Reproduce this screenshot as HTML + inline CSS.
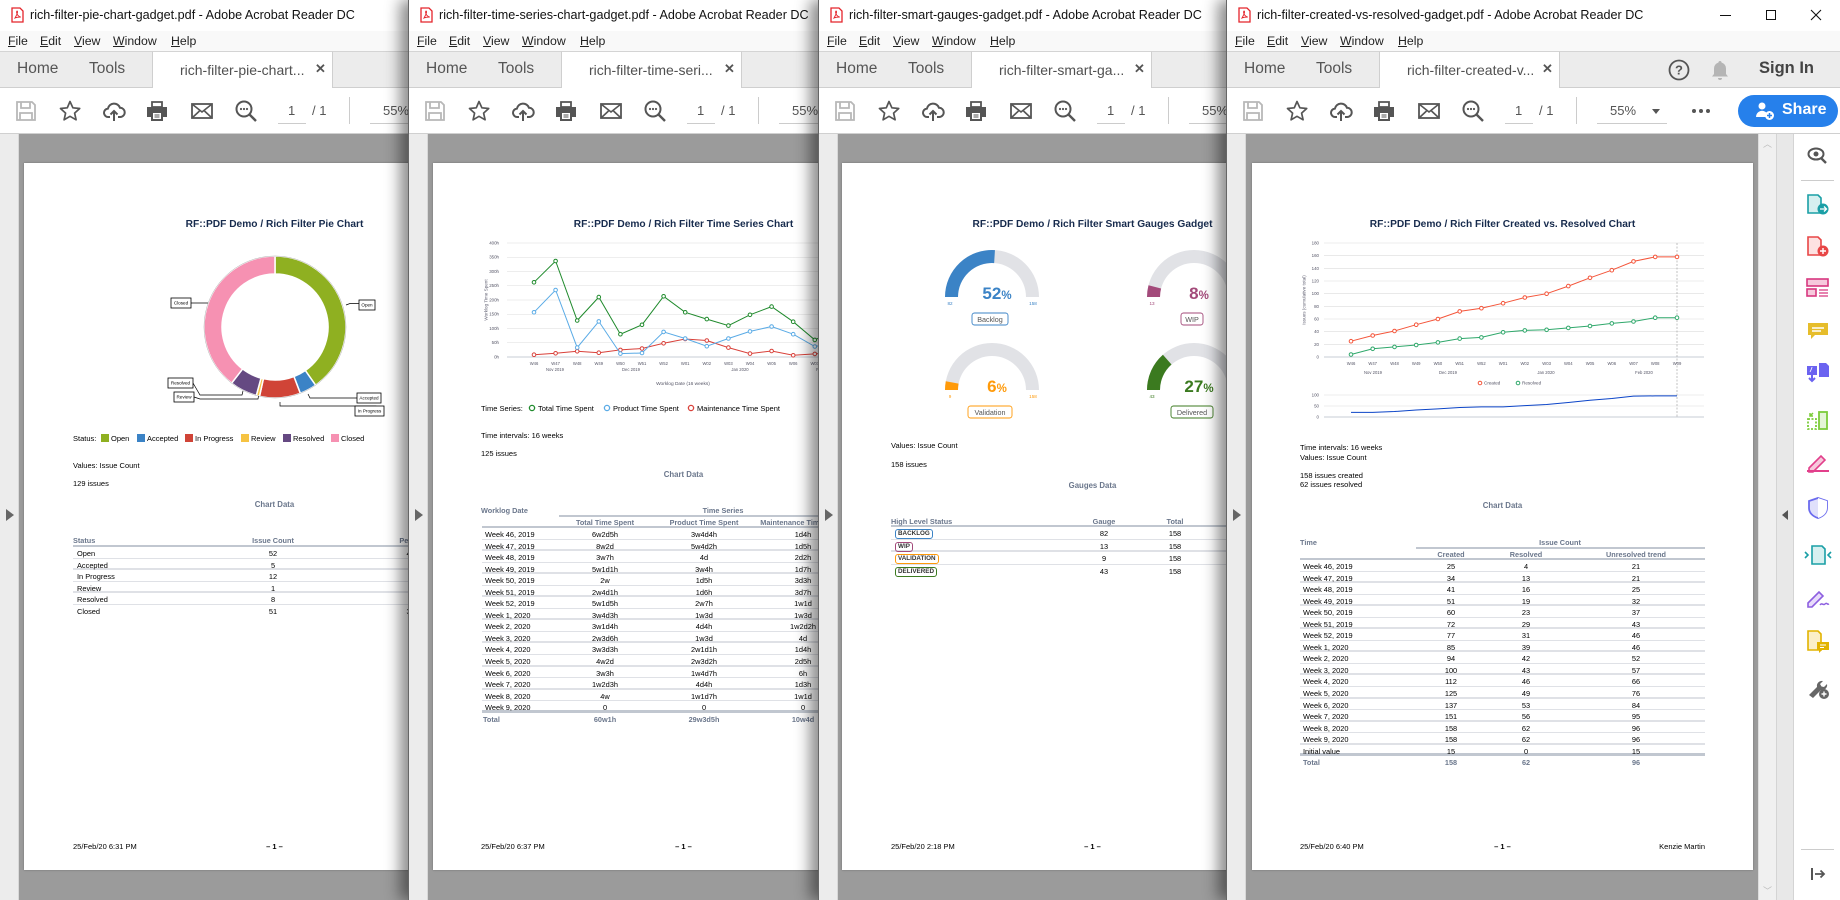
<!DOCTYPE html>
<html><head><meta charset="utf-8">
<style>
*{box-sizing:border-box}
body{margin:0;width:1840px;height:900px;overflow:hidden;background:#999;font-family:"Liberation Sans",sans-serif;position:relative}
.win{position:absolute;top:0;height:900px;background:#fff;overflow:hidden;border-left:1px solid #666}
.sh{box-shadow:-8px 0 14px rgba(0,0,0,.45)}
.a{position:absolute}
.tb{position:absolute;left:0;top:0;right:0;height:31px;background:#fff}
.tb .t{position:absolute;left:30px;top:8px;font-size:12.6px;color:#111;white-space:nowrap}
.mn{position:absolute;top:31px;height:20px;left:0;right:0;background:#f9f9f9;font-size:12.3px;color:#222}
.mn span{position:absolute;top:3px}
.mn u{text-decoration:underline}
.tabs{position:absolute;top:51px;height:37px;left:0;right:0;background:#ececec;border-top:1px solid #d4d4d4;border-bottom:1px solid #cfcfcf}
.tabs .hm{position:absolute;top:8px;font-size:15.5px;color:#555}
.tab{position:absolute;left:152px;width:181px;top:-1px;height:37px;background:#fff;border-left:1px solid #cfcfcf;border-right:1px solid #cfcfcf;border-top:1px solid #d4d4d4}
.tab span{position:absolute;left:27px;top:10px;font-size:14px;color:#505050;white-space:nowrap}
.tab b{position:absolute;left:162px;top:9px;font-size:13px;color:#555}
.tool{position:absolute;top:88px;height:46px;left:0;right:0;background:#fff;border-bottom:1px solid #d0d0d0}
.tool svg{position:absolute;top:11px;width:24px;height:24px}
.tool .n{position:absolute;top:15px;font-size:13px;color:#555}
.cont{position:absolute;top:134px;bottom:0;left:0;right:0;background:#9b9b9b}
.lp{position:absolute;left:0;top:0;bottom:0;width:19px;background:#ececec;border-right:1px solid #d8d8d8}
.lp i{position:absolute;left:6px;top:375px;width:0;height:0;border-top:6px solid transparent;border-bottom:6px solid transparent;border-left:8px solid #666}
.page{position:absolute;top:29px;width:501px;height:707px;background:#fff;overflow:hidden;box-shadow:0 0 2px rgba(0,0,0,.3)}
.p{position:absolute;font-size:7.5px;color:#000;white-space:nowrap;line-height:9px}
.ct{left:0;width:501px;text-align:center}
.ttl{font-weight:bold;font-size:10.2px;color:#172b4d;line-height:12px}
.cd{font-weight:bold;font-size:7.8px;color:#6b778c}
.tbl{position:absolute;font-size:7.4px;color:#000}
.hd{position:absolute;color:#6b778c;font-weight:bold;white-space:nowrap;font-size:7.3px}
.r{position:relative;height:11.55px;border-bottom:1px solid #dfe1e6}
.r:nth-child(odd){border-bottom:2px solid #dfe1e6}
.r span{position:absolute;top:2px;white-space:nowrap}
.r .c{transform:translateX(-50%)}
.bd{display:inline-block;border:1px solid;border-radius:3px;padding:0 2px;font-weight:bold;font-size:6.3px;line-height:8px;color:#333}
svg text{font-family:"Liberation Sans",sans-serif}
</style></head><body>

<!-- ============ WINDOW 1 ============ -->
<div class="win" style="left:0;width:410px;z-index:1;border-left:none">
 <div class="tb"><svg class="a" style="left:11px;top:7px" width="13" height="16" viewBox="0 0 13 16"><path d="M1 1h8l3 3v11H1z" fill="#fff" stroke="#e4242b" stroke-width="1.3"/><path d="M4 11c1-2 3-5 2.5-6.5S5 5 6 7s3 3 3.5 3-3.5 0-5.5 1z" fill="none" stroke="#e4242b" stroke-width=".9"/></svg><span class="t">rich-filter-pie-chart-gadget.pdf - Adobe Acrobat Reader DC</span></div>
 <div class="mn"><span style="left:8px"><u>F</u>ile</span><span style="left:40px"><u>E</u>dit</span><span style="left:74px"><u>V</u>iew</span><span style="left:113px"><u>W</u>indow</span><span style="left:171px"><u>H</u>elp</span></div>
 <div class="tabs"><span class="hm" style="left:17px">Home</span><span class="hm" style="left:89px">Tools</span><div class="tab"><span>rich-filter-pie-chart...</span><b>✕</b></div></div>
 <div class="tool">
  <svg style="left:14px" viewBox="0 0 24 24"><path d="M3 3h15l3 3v15H3z M7 3v6h9V3 M6 21v-7h12v7" fill="none" stroke="#b8b8b8" stroke-width="1.8"/></svg>
  <svg style="left:58px" viewBox="0 0 24 24"><path d="M12 2.5l2.9 6.3 6.8.7-5.1 4.6 1.5 6.7L12 17.3l-5.9 3.5 1.5-6.7L2.5 9.5l6.8-.7z" fill="none" stroke="#555" stroke-width="1.7" stroke-linejoin="round"/></svg>
  <svg style="left:102px" viewBox="0 0 24 24"><path d="M8 18H6.5a4.2 4.2 0 0 1-.6-8.4A6.3 6.3 0 0 1 18 8.8a4.6 4.6 0 0 1 .2 9.2H16 M12 22V12 M8.5 15.5 12 12l3.5 3.5" fill="none" stroke="#555" stroke-width="2"/></svg>
  <svg style="left:145px" viewBox="0 0 24 24"><path d="M7 3h10v5H7z" fill="none" stroke="#555" stroke-width="1.8"/><path d="M2 8h20v10h-4v4H6v-4H2z" fill="#555"/><rect x="8" y="14" width="8" height="6" fill="#fff"/><path d="M9.5 16h5M9.5 18h5" stroke="#555"/></svg>
  <svg style="left:190px" viewBox="0 0 24 24"><rect x="2" y="5" width="20" height="14" fill="none" stroke="#555" stroke-width="1.8"/><path d="M2 5l10 8 10-8M2 19l7.5-7M22 19l-7.5-7" fill="none" stroke="#555" stroke-width="1.6"/></svg>
  <svg style="left:234px" viewBox="0 0 24 24"><circle cx="10" cy="10" r="7.5" fill="none" stroke="#555" stroke-width="2"/><path d="M15.5 15.5 22 22" stroke="#555" stroke-width="2.4"/><circle cx="7" cy="10" r="1.1" fill="#555"/><circle cx="10" cy="10" r="1.1" fill="#555"/><circle cx="13" cy="10" r="1.1" fill="#555"/></svg>
  <span class="n" style="left:288px">1</span><div class="a" style="left:278px;top:35px;width:28px;height:1px;background:#ccc"></div>
  <span class="n" style="left:312px">/ 1</span>
  <div class="a" style="left:349px;top:9px;width:1px;height:27px;background:#ccc"></div>
  <span class="n" style="left:383px">55%</span><div class="a" style="left:370px;top:35px;width:60px;height:1px;background:#ccc"></div>
 </div>
 <div class="cont"><div class="lp"><i></i></div>
  <div class="page" style="left:24px">
   <div class="p ct ttl" style="top:56px">RF::PDF Demo / Rich Filter Pie Chart</div>
   <svg class="a" style="left:0;top:0" width="501" height="300" viewBox="0 0 501 300">
    <g stroke="#fff" stroke-width="1.5">
     <path d="M251 93A71 71 0 0 1 291.6 222.2L281.3 207.5A53 53 0 0 0 251 111Z" fill="#8fb021"/>
     <path d="M291.6 222.2A71 71 0 0 1 276.3 230.3L269.9 213.5A53 53 0 0 0 281.3 207.5Z" fill="#3b83c6"/>
     <path d="M276.3 230.3A71 71 0 0 1 235.5 233.3L239.4 215.7A53 53 0 0 0 269.9 213.5Z" fill="#d04437"/>
     <path d="M235.5 233.3A71 71 0 0 1 232.3 232.5L237 215.1A53 53 0 0 0 239.4 215.7Z" fill="#f6c342"/>
     <path d="M232.3 232.5A71 71 0 0 1 207.6 220.2L218.6 205.9A53 53 0 0 0 237 215.1Z" fill="#654982"/>
     <path d="M207.6 220.2A71 71 0 0 1 251 93L251 111A53 53 0 0 0 218.6 205.9Z" fill="#f691b2"/>
    </g>
    <circle cx="251" cy="164" r="71" fill="none" stroke="#999" stroke-width=".4"/>
    <g fill="none" stroke="#000" stroke-width=".7">
     <path d="M167 140H184"/><path d="M322 142l4-1.5H335"/>
     <path d="M169 220l7 12H218l1-4"/><path d="M170 234l6 2H234l.5-3"/>
     <path d="M357 235H286l-2-4"/><path d="M355 248l-3-5H256v-4"/>
    </g>
    <g fill="#fff" stroke="#000" stroke-width=".8">
     <rect x="147" y="135" width="20" height="10"/><rect x="335" y="137" width="16" height="10"/>
     <rect x="144" y="215" width="25" height="10"/><rect x="150" y="229" width="20" height="10"/>
     <rect x="333" y="230" width="24" height="10"/><rect x="331" y="243" width="29" height="10"/>
    </g>
    <g font-size="4.6" fill="#000" text-anchor="middle">
     <text x="157" y="141.5">Closed</text><text x="343" y="143.5">Open</text>
     <text x="156.5" y="221.5">Resolved</text><text x="160" y="235.5">Review</text>
     <text x="345" y="236.5">Accepted</text><text x="345.5" y="249.5">In Progress</text>
    </g>
   </svg>
   <div class="p" style="left:49px;top:271px">Status:</div>
   <div class="a" style="left:77px;top:271px;width:8px;height:8px;background:#8fb021"></div><div class="p" style="left:87px;top:271px">Open</div>
   <div class="a" style="left:113px;top:271px;width:8px;height:8px;background:#3b83c6"></div><div class="p" style="left:123px;top:271px">Accepted</div>
   <div class="a" style="left:161px;top:271px;width:8px;height:8px;background:#d04437"></div><div class="p" style="left:171px;top:271px">In Progress</div>
   <div class="a" style="left:217px;top:271px;width:8px;height:8px;background:#f6c342"></div><div class="p" style="left:227px;top:271px">Review</div>
   <div class="a" style="left:259px;top:271px;width:8px;height:8px;background:#654982"></div><div class="p" style="left:269px;top:271px">Resolved</div>
   <div class="a" style="left:307px;top:271px;width:8px;height:8px;background:#f691b2"></div><div class="p" style="left:317px;top:271px">Closed</div>
   <div class="p" style="left:49px;top:298px">Values: Issue Count</div>
   <div class="p" style="left:49px;top:316px">129 issues</div>
   <div class="p ct cd" style="top:337px">Chart Data</div>
   <div class="tbl" style="left:49px;top:372px;width:404px">
    <div style="position:relative;height:12px;border-bottom:2px solid #c1c7d0"><span class="hd" style="left:0;top:1px">Status</span><span class="hd" style="left:200px;top:1px;transform:translateX(-50%)">Issue Count</span><span class="hd" style="left:346px;top:1px;transform:translateX(-50%)">Percentage</span></div>
    <div class="r"><span style="left:4px">Open</span><span class="c" style="left:200px">52</span><span class="c" style="left:346px">40.31%</span></div>
    <div class="r"><span style="left:4px">Accepted</span><span class="c" style="left:200px">5</span><span class="c" style="left:346px">3.88%</span></div>
    <div class="r"><span style="left:4px">In Progress</span><span class="c" style="left:200px">12</span><span class="c" style="left:346px">9.3%</span></div>
    <div class="r"><span style="left:4px">Review</span><span class="c" style="left:200px">1</span><span class="c" style="left:346px">0.78%</span></div>
    <div class="r"><span style="left:4px">Resolved</span><span class="c" style="left:200px">8</span><span class="c" style="left:346px">6.2%</span></div>
    <div class="r" style="border-bottom:none"><span style="left:4px">Closed</span><span class="c" style="left:200px">51</span><span class="c" style="left:346px">39.53%</span></div>
   </div>
   <div class="p" style="left:49px;top:679px">25/Feb/20 6:31 PM</div>
   <div class="p ct" style="top:679px;font-weight:bold">– 1 –</div>
  </div>
 </div>
</div>

<!-- ============ WINDOW 2 ============ -->
<div class="win sh" style="left:408px;width:411px;z-index:2">
 <div class="tb"><svg class="a" style="left:11px;top:7px" width="13" height="16" viewBox="0 0 13 16"><path d="M1 1h8l3 3v11H1z" fill="#fff" stroke="#e4242b" stroke-width="1.3"/><path d="M4 11c1-2 3-5 2.5-6.5S5 5 6 7s3 3 3.5 3-3.5 0-5.5 1z" fill="none" stroke="#e4242b" stroke-width=".9"/></svg><span class="t">rich-filter-time-series-chart-gadget.pdf - Adobe Acrobat Reader DC</span></div>
 <div class="mn"><span style="left:8px"><u>F</u>ile</span><span style="left:40px"><u>E</u>dit</span><span style="left:74px"><u>V</u>iew</span><span style="left:113px"><u>W</u>indow</span><span style="left:171px"><u>H</u>elp</span></div>
 <div class="tabs"><span class="hm" style="left:17px">Home</span><span class="hm" style="left:89px">Tools</span><div class="tab"><span>rich-filter-time-seri...</span><b>✕</b></div></div>
 <div class="tool">
  <svg style="left:14px" viewBox="0 0 24 24"><path d="M3 3h15l3 3v15H3z M7 3v6h9V3 M6 21v-7h12v7" fill="none" stroke="#b8b8b8" stroke-width="1.8"/></svg>
  <svg style="left:58px" viewBox="0 0 24 24"><path d="M12 2.5l2.9 6.3 6.8.7-5.1 4.6 1.5 6.7L12 17.3l-5.9 3.5 1.5-6.7L2.5 9.5l6.8-.7z" fill="none" stroke="#555" stroke-width="1.7" stroke-linejoin="round"/></svg>
  <svg style="left:102px" viewBox="0 0 24 24"><path d="M8 18H6.5a4.2 4.2 0 0 1-.6-8.4A6.3 6.3 0 0 1 18 8.8a4.6 4.6 0 0 1 .2 9.2H16 M12 22V12 M8.5 15.5 12 12l3.5 3.5" fill="none" stroke="#555" stroke-width="2"/></svg>
  <svg style="left:145px" viewBox="0 0 24 24"><path d="M7 3h10v5H7z" fill="none" stroke="#555" stroke-width="1.8"/><path d="M2 8h20v10h-4v4H6v-4H2z" fill="#555"/><rect x="8" y="14" width="8" height="6" fill="#fff"/><path d="M9.5 16h5M9.5 18h5" stroke="#555"/></svg>
  <svg style="left:190px" viewBox="0 0 24 24"><rect x="2" y="5" width="20" height="14" fill="none" stroke="#555" stroke-width="1.8"/><path d="M2 5l10 8 10-8M2 19l7.5-7M22 19l-7.5-7" fill="none" stroke="#555" stroke-width="1.6"/></svg>
  <svg style="left:234px" viewBox="0 0 24 24"><circle cx="10" cy="10" r="7.5" fill="none" stroke="#555" stroke-width="2"/><path d="M15.5 15.5 22 22" stroke="#555" stroke-width="2.4"/><circle cx="7" cy="10" r="1.1" fill="#555"/><circle cx="10" cy="10" r="1.1" fill="#555"/><circle cx="13" cy="10" r="1.1" fill="#555"/></svg>
  <span class="n" style="left:288px">1</span><div class="a" style="left:278px;top:35px;width:28px;height:1px;background:#ccc"></div>
  <span class="n" style="left:312px">/ 1</span>
  <div class="a" style="left:349px;top:9px;width:1px;height:27px;background:#ccc"></div>
  <span class="n" style="left:383px">55%</span><div class="a" style="left:370px;top:35px;width:60px;height:1px;background:#ccc"></div>
 </div>
 <div class="cont"><div class="lp"><i></i></div>
  <div class="page" style="left:24px">
   <div class="p ct ttl" style="top:56px">RF::PDF Demo / Rich Filter Time Series Chart</div>
   <svg class="a" style="left:0;top:0" width="501" height="260" viewBox="0 0 501 260">
    <defs>
     <marker id="m1" viewBox="0 0 5 5" refX="2.5" refY="2.5" markerWidth="5" markerHeight="5" markerUnits="userSpaceOnUse"><circle cx="2.5" cy="2.5" r="1.8" fill="#fff" stroke="#1f8a2c" stroke-width="1"/></marker>
     <marker id="m2" viewBox="0 0 5 5" refX="2.5" refY="2.5" markerWidth="5" markerHeight="5" markerUnits="userSpaceOnUse"><circle cx="2.5" cy="2.5" r="1.8" fill="#fff" stroke="#5aabe6" stroke-width="1"/></marker>
     <marker id="m3" viewBox="0 0 5 5" refX="2.5" refY="2.5" markerWidth="5" markerHeight="5" markerUnits="userSpaceOnUse"><circle cx="2.5" cy="2.5" r="1.8" fill="#fff" stroke="#d9413a" stroke-width="1"/></marker>
    </defs>
    <g stroke="#dcdcdc" stroke-width=".6"><path d="M74 80H501M74 94.25H501M74 108.5H501M74 122.75H501M74 137H501M74 151.25H501M74 165.5H501M74 179.75H501"/></g>
    <path d="M74 194H501" stroke="#b5bcc8" stroke-width=".8"/>
    <g font-size="4.4" fill="#556" text-anchor="end"><text x="66" y="81.5">400h</text><text x="66" y="95.7">350h</text><text x="66" y="110">300h</text><text x="66" y="124.2">250h</text><text x="66" y="138.5">200h</text><text x="66" y="152.7">150h</text><text x="66" y="167">100h</text><text x="66" y="181.2">50h</text><text x="66" y="195.5">0h</text></g>
    <text transform="translate(54.5 137) rotate(-90)" font-size="4.6" fill="#667" text-anchor="middle">Worklog Time Spent</text>
    <g font-size="4.2" fill="#556" text-anchor="middle"><text x="101" y="202">W46</text><text x="122.6" y="202">W47</text><text x="144.2" y="202">W48</text><text x="165.8" y="202">W49</text><text x="187.4" y="202">W50</text><text x="209" y="202">W51</text><text x="230.6" y="202">W52</text><text x="252.2" y="202">W01</text><text x="273.8" y="202">W02</text><text x="295.4" y="202">W03</text><text x="317" y="202">W04</text><text x="338.6" y="202">W05</text><text x="360.2" y="202">W06</text><text x="381.8" y="202">W07</text><text x="403.4" y="202">W08</text><text x="425" y="202">W09</text>
     <text x="122" y="208">Nov 2019</text><text x="198" y="208">Dec 2019</text><text x="307" y="208">Jan 2020</text><text x="392" y="208">Feb 2020</text></g>
    <text x="250" y="222" font-size="4.8" fill="#556" text-anchor="middle">Worklog Date (16 weeks)</text>
    <polyline fill="none" stroke="#d9413a" stroke-width="1" marker-start="url(#m3)" marker-mid="url(#m3)" marker-end="url(#m3)" points="101,191.7 122.6,190.3 144.2,188.3 165.8,189.7 187.4,186.9 209,185.5 230.6,180.3 252.2,176 273.8,177.5 295.4,184.6 317,190.6 338.6,188 360.2,192.3 381.8,190.9 403.4,189.7 425,191.2"/>
    <polyline fill="none" stroke="#5aabe6" stroke-width="1" marker-start="url(#m2)" marker-mid="url(#m2)" marker-end="url(#m2)" points="101,149.3 122.6,127 144.2,184.6 165.8,158.4 187.4,190.6 209,190 230.6,168.9 252.2,175.5 273.8,183.2 295.4,175.5 317,168.4 338.6,163.5 360.2,171.2 381.8,183.5 403.4,179.8 425,182.6"/>
    <polyline fill="none" stroke="#1f8a2c" stroke-width="1" marker-start="url(#m1)" marker-mid="url(#m1)" marker-end="url(#m1)" points="101,119.3 122.6,98 144.2,157.5 165.8,134.1 187.4,171.2 209,161.8 230.6,133.3 252.2,149.3 273.8,156.1 295.4,162.6 317,151.8 338.6,143.6 360.2,158.7 381.8,176.9 403.4,167 425,174"/>
    <g fill="#fff" stroke-width="1.3"><circle cx="99" cy="245" r="2.6" stroke="#1f8a2c"/><circle cx="174" cy="245" r="2.6" stroke="#5aabe6"/><circle cx="258" cy="245" r="2.6" stroke="#d9413a"/></g>
   </svg>
   <div class="p" style="left:48px;top:241px">Time Series:</div>
   <div class="p" style="left:105px;top:241px">Total Time Spent</div>
   <div class="p" style="left:180px;top:241px">Product Time Spent</div>
   <div class="p" style="left:264px;top:241px">Maintenance Time Spent</div>
   <div class="p" style="left:48px;top:268px">Time intervals: 16 weeks</div>
   <div class="p" style="left:48px;top:286px">125 issues</div>
   <div class="p ct cd" style="top:307px">Chart Data</div>
   <div class="tbl" style="left:49px;top:341px;width:452px">
    <div style="position:relative;height:24px;border-bottom:2px solid #c1c7d0">
     <span class="hd" style="left:-1px;top:2px">Worklog Date</span>
     <span class="hd" style="left:241px;top:2px;transform:translateX(-50%)">Time Series</span>
     <div class="a" style="left:77px;top:11px;width:380px;height:2px;background:#c1c7d0"></div>
     <span class="hd" style="left:123px;top:14px;transform:translateX(-50%)">Total Time Spent</span>
     <span class="hd" style="left:222px;top:14px;transform:translateX(-50%)">Product Time Spent</span>
     <span class="hd" style="left:321px;top:14px;transform:translateX(-50%)">Maintenance Time Spent</span>
    </div>
    <div class="r"><span style="left:3px">Week 46, 2019</span><span class="c" style="left:123px">6w2d5h</span><span class="c" style="left:222px">3w4d4h</span><span class="c" style="left:321px">1d4h</span></div>
    <div class="r"><span style="left:3px">Week 47, 2019</span><span class="c" style="left:123px">8w2d</span><span class="c" style="left:222px">5w4d2h</span><span class="c" style="left:321px">1d5h</span></div>
    <div class="r"><span style="left:3px">Week 48, 2019</span><span class="c" style="left:123px">3w7h</span><span class="c" style="left:222px">4d</span><span class="c" style="left:321px">2d2h</span></div>
    <div class="r"><span style="left:3px">Week 49, 2019</span><span class="c" style="left:123px">5w1d1h</span><span class="c" style="left:222px">3w4h</span><span class="c" style="left:321px">1d7h</span></div>
    <div class="r"><span style="left:3px">Week 50, 2019</span><span class="c" style="left:123px">2w</span><span class="c" style="left:222px">1d5h</span><span class="c" style="left:321px">3d3h</span></div>
    <div class="r"><span style="left:3px">Week 51, 2019</span><span class="c" style="left:123px">2w4d1h</span><span class="c" style="left:222px">1d6h</span><span class="c" style="left:321px">3d7h</span></div>
    <div class="r"><span style="left:3px">Week 52, 2019</span><span class="c" style="left:123px">5w1d5h</span><span class="c" style="left:222px">2w7h</span><span class="c" style="left:321px">1w1d</span></div>
    <div class="r"><span style="left:3px">Week 1, 2020</span><span class="c" style="left:123px">3w4d3h</span><span class="c" style="left:222px">1w3d</span><span class="c" style="left:321px">1w3d</span></div>
    <div class="r"><span style="left:3px">Week 2, 2020</span><span class="c" style="left:123px">3w1d4h</span><span class="c" style="left:222px">4d4h</span><span class="c" style="left:321px">1w2d2h</span></div>
    <div class="r"><span style="left:3px">Week 3, 2020</span><span class="c" style="left:123px">2w3d6h</span><span class="c" style="left:222px">1w3d</span><span class="c" style="left:321px">4d</span></div>
    <div class="r"><span style="left:3px">Week 4, 2020</span><span class="c" style="left:123px">3w3d3h</span><span class="c" style="left:222px">2w1d1h</span><span class="c" style="left:321px">1d4h</span></div>
    <div class="r"><span style="left:3px">Week 5, 2020</span><span class="c" style="left:123px">4w2d</span><span class="c" style="left:222px">2w3d2h</span><span class="c" style="left:321px">2d5h</span></div>
    <div class="r"><span style="left:3px">Week 6, 2020</span><span class="c" style="left:123px">3w3h</span><span class="c" style="left:222px">1w4d7h</span><span class="c" style="left:321px">6h</span></div>
    <div class="r"><span style="left:3px">Week 7, 2020</span><span class="c" style="left:123px">1w2d3h</span><span class="c" style="left:222px">4d4h</span><span class="c" style="left:321px">1d3h</span></div>
    <div class="r"><span style="left:3px">Week 8, 2020</span><span class="c" style="left:123px">4w</span><span class="c" style="left:222px">1w1d7h</span><span class="c" style="left:321px">1w1d</span></div>
    <div class="r" style="border-bottom:3px solid #c1c7d0"><span style="left:3px">Week 9, 2020</span><span class="c" style="left:123px">0</span><span class="c" style="left:222px">0</span><span class="c" style="left:321px">0</span></div>
    <div style="position:relative;height:12px"><span class="hd" style="left:1px;top:2px">Total</span><span class="hd" style="left:123px;top:2px;transform:translateX(-50%)">60w1h</span><span class="hd" style="left:222px;top:2px;transform:translateX(-50%)">29w3d5h</span><span class="hd" style="left:321px;top:2px;transform:translateX(-50%)">10w4d</span></div>
   </div>
   <div class="p" style="left:48px;top:679px">25/Feb/20 6:37 PM</div>
   <div class="p ct" style="top:679px;font-weight:bold">– 1 –</div>
  </div>
 </div>
</div>

<!-- ============ WINDOW 3 ============ -->
<div class="win sh" style="left:818px;width:410px;z-index:3">
 <div class="tb"><svg class="a" style="left:11px;top:7px" width="13" height="16" viewBox="0 0 13 16"><path d="M1 1h8l3 3v11H1z" fill="#fff" stroke="#e4242b" stroke-width="1.3"/><path d="M4 11c1-2 3-5 2.5-6.5S5 5 6 7s3 3 3.5 3-3.5 0-5.5 1z" fill="none" stroke="#e4242b" stroke-width=".9"/></svg><span class="t">rich-filter-smart-gauges-gadget.pdf - Adobe Acrobat Reader DC</span></div>
 <div class="mn"><span style="left:8px"><u>F</u>ile</span><span style="left:40px"><u>E</u>dit</span><span style="left:74px"><u>V</u>iew</span><span style="left:113px"><u>W</u>indow</span><span style="left:171px"><u>H</u>elp</span></div>
 <div class="tabs"><span class="hm" style="left:17px">Home</span><span class="hm" style="left:89px">Tools</span><div class="tab"><span>rich-filter-smart-ga...</span><b>✕</b></div></div>
 <div class="tool">
  <svg style="left:14px" viewBox="0 0 24 24"><path d="M3 3h15l3 3v15H3z M7 3v6h9V3 M6 21v-7h12v7" fill="none" stroke="#b8b8b8" stroke-width="1.8"/></svg>
  <svg style="left:58px" viewBox="0 0 24 24"><path d="M12 2.5l2.9 6.3 6.8.7-5.1 4.6 1.5 6.7L12 17.3l-5.9 3.5 1.5-6.7L2.5 9.5l6.8-.7z" fill="none" stroke="#555" stroke-width="1.7" stroke-linejoin="round"/></svg>
  <svg style="left:102px" viewBox="0 0 24 24"><path d="M8 18H6.5a4.2 4.2 0 0 1-.6-8.4A6.3 6.3 0 0 1 18 8.8a4.6 4.6 0 0 1 .2 9.2H16 M12 22V12 M8.5 15.5 12 12l3.5 3.5" fill="none" stroke="#555" stroke-width="2"/></svg>
  <svg style="left:145px" viewBox="0 0 24 24"><path d="M7 3h10v5H7z" fill="none" stroke="#555" stroke-width="1.8"/><path d="M2 8h20v10h-4v4H6v-4H2z" fill="#555"/><rect x="8" y="14" width="8" height="6" fill="#fff"/><path d="M9.5 16h5M9.5 18h5" stroke="#555"/></svg>
  <svg style="left:190px" viewBox="0 0 24 24"><rect x="2" y="5" width="20" height="14" fill="none" stroke="#555" stroke-width="1.8"/><path d="M2 5l10 8 10-8M2 19l7.5-7M22 19l-7.5-7" fill="none" stroke="#555" stroke-width="1.6"/></svg>
  <svg style="left:234px" viewBox="0 0 24 24"><circle cx="10" cy="10" r="7.5" fill="none" stroke="#555" stroke-width="2"/><path d="M15.5 15.5 22 22" stroke="#555" stroke-width="2.4"/><circle cx="7" cy="10" r="1.1" fill="#555"/><circle cx="10" cy="10" r="1.1" fill="#555"/><circle cx="13" cy="10" r="1.1" fill="#555"/></svg>
  <span class="n" style="left:288px">1</span><div class="a" style="left:278px;top:35px;width:28px;height:1px;background:#ccc"></div>
  <span class="n" style="left:312px">/ 1</span>
  <div class="a" style="left:349px;top:9px;width:1px;height:27px;background:#ccc"></div>
  <span class="n" style="left:383px">55%</span><div class="a" style="left:370px;top:35px;width:60px;height:1px;background:#ccc"></div>
 </div>
 <div class="cont"><div class="lp"><i></i></div>
  <div class="page" style="left:23px">
   <div class="p ct ttl" style="top:56px">RF::PDF Demo / Rich Filter Smart Gauges Gadget</div>
   <svg class="a" style="left:0;top:0" width="501" height="270" viewBox="0 0 501 270">
    <g fill="#e1e2e6">
     <path d="M103 134A47 47 0 0 1 197 134L184 134A34 34 0 0 0 116 134Z"/>
     <path d="M305 134A47 47 0 0 1 399 134L386 134A34 34 0 0 0 318 134Z"/>
     <path d="M103 227A47 47 0 0 1 197 227L184 227A34 34 0 0 0 116 227Z"/>
     <path d="M305 227A47 47 0 0 1 399 227L386 227A34 34 0 0 0 318 227Z"/>
    </g>
    <path d="M103 134A47 47 0 0 1 152.95 87.1L152.14 100.07A34 34 0 0 0 116 134Z" fill="#3b83c6"/>
    <path d="M305 134A47 47 0 0 1 306.5 122.3L319.1 125.54A34 34 0 0 0 318 134Z" fill="#a34a7a"/>
    <path d="M103 227A47 47 0 0 1 103.8 218.2L116.6 220.63A34 34 0 0 0 116 227Z" fill="#ff9a0a"/>
    <path d="M305 227A47 47 0 0 1 320.9 191.7L329.5 201.5A34 34 0 0 0 318 227Z" fill="#3b7a1f"/>
    <g font-weight="bold" text-anchor="middle">
     <text x="155" y="136" fill="#3b83c6" font-size="17">52<tspan font-size="11.5">%</tspan></text>
     <text x="357" y="136" fill="#a34a7a" font-size="17">8<tspan font-size="11.5">%</tspan></text>
     <text x="155" y="229" fill="#ff9a0a" font-size="17">6<tspan font-size="11.5">%</tspan></text>
     <text x="357" y="229" fill="#3b7a1f" font-size="17">27<tspan font-size="11.5">%</tspan></text>
    </g>
    <g font-size="4.6" text-anchor="middle">
     <text x="108" y="142" fill="#3b83c6">82</text><text x="191" y="142" fill="#3b83c6">158</text>
     <text x="310" y="142" fill="#a34a7a">13</text><text x="393" y="142" fill="#a34a7a">158</text>
     <text x="108" y="235" fill="#ff9a0a">9</text><text x="191" y="235" fill="#ff9a0a">158</text>
     <text x="310" y="235" fill="#3b7a1f">43</text><text x="393" y="235" fill="#3b7a1f">158</text>
    </g>
    <g fill="#fff" stroke-width=".9">
     <rect x="130" y="150" width="36" height="12" rx="2.5" stroke="#3b83c6"/>
     <rect x="339" y="150" width="22" height="12" rx="2.5" stroke="#a34a7a"/>
     <rect x="126" y="243" width="44" height="12" rx="2.5" stroke="#ff9a0a"/>
     <rect x="329" y="243" width="42" height="12" rx="2.5" stroke="#3b7a1f"/>
    </g>
    <g font-size="7.2" text-anchor="middle" fill="#555">
     <text x="148" y="158.8">Backlog</text><text x="350" y="158.8">WIP</text>
     <text x="148" y="251.8">Validation</text><text x="350" y="251.8">Delivered</text>
    </g>
   </svg>
   <div class="p" style="left:49px;top:278px">Values: Issue Count</div>
   <div class="p" style="left:49px;top:297px">158 issues</div>
   <div class="p ct cd" style="top:318px">Gauges Data</div>
   <div class="tbl" style="left:49px;top:352px;width:452px">
    <div style="position:relative;height:12px;border-bottom:2px solid #c1c7d0"><span class="hd" style="left:0;top:2px">High Level Status</span><span class="hd" style="left:213px;top:2px;transform:translateX(-50%)">Gauge</span><span class="hd" style="left:284px;top:2px;transform:translateX(-50%)">Total</span></div>
    <div class="r" style="height:12.7px"><span style="left:4px;top:1px"><span class="bd" style="position:static;border-color:#3b83c6">BACKLOG</span></span><span class="c" style="left:213px">82</span><span class="c" style="left:284px">158</span></div>
    <div class="r" style="height:12.7px"><span style="left:4px;top:1px"><span class="bd" style="position:static;border-color:#a34a7a">WIP</span></span><span class="c" style="left:213px">13</span><span class="c" style="left:284px">158</span></div>
    <div class="r" style="height:12.7px"><span style="left:4px;top:1px"><span class="bd" style="position:static;border-color:#ff9a0a">VALIDATION</span></span><span class="c" style="left:213px">9</span><span class="c" style="left:284px">158</span></div>
    <div class="r" style="height:12.7px;border-bottom:none"><span style="left:4px;top:1px"><span class="bd" style="position:static;border-color:#3b7a1f">DELIVERED</span></span><span class="c" style="left:213px">43</span><span class="c" style="left:284px">158</span></div>
   </div>
   <div class="p" style="left:49px;top:679px">25/Feb/20 2:18 PM</div>
   <div class="p ct" style="top:679px;font-weight:bold">– 1 –</div>
  </div>
 </div>
</div>

<!-- ============ WINDOW 4 ============ -->
<div class="win sh" style="left:1226px;width:614px;z-index:4">
 <div class="tb"><svg class="a" style="left:11px;top:7px" width="13" height="16" viewBox="0 0 13 16"><path d="M1 1h8l3 3v11H1z" fill="#fff" stroke="#e4242b" stroke-width="1.3"/><path d="M4 11c1-2 3-5 2.5-6.5S5 5 6 7s3 3 3.5 3-3.5 0-5.5 1z" fill="none" stroke="#e4242b" stroke-width=".9"/></svg><span class="t">rich-filter-created-vs-resolved-gadget.pdf - Adobe Acrobat Reader DC</span>
  <div class="a" style="left:493px;top:15px;width:11px;height:1px;background:#111"></div>
  <div class="a" style="left:539px;top:10px;width:10px;height:10px;border:1px solid #111"></div>
  <svg class="a" style="left:583px;top:9px" width="12" height="12" viewBox="0 0 12 12"><path d="M1 1l10 10M11 1 1 11" stroke="#111" stroke-width="1.1"/></svg>
 </div>
 <div class="mn"><span style="left:8px"><u>F</u>ile</span><span style="left:40px"><u>E</u>dit</span><span style="left:74px"><u>V</u>iew</span><span style="left:113px"><u>W</u>indow</span><span style="left:171px"><u>H</u>elp</span></div>
 <div class="tabs"><span class="hm" style="left:17px">Home</span><span class="hm" style="left:89px">Tools</span><div class="tab"><span>rich-filter-created-v...</span><b>✕</b></div>
  <svg class="a" style="left:441px;top:7px" width="22" height="22" viewBox="0 0 22 22"><circle cx="11" cy="11" r="9.5" fill="none" stroke="#555" stroke-width="1.8"/><text x="11" y="15.5" font-size="13" font-weight="bold" fill="#555" text-anchor="middle">?</text></svg>
  <svg class="a" style="left:483px;top:7px" width="20" height="22" viewBox="0 0 20 22"><path d="M10 2a1.5 1.5 0 0 1 1.5 1.5A6 6 0 0 1 16 9.5V15l2 2.5H2L4 15V9.5a6 6 0 0 1 4.5-6A1.5 1.5 0 0 1 10 2z" fill="#b5b5b5"/><path d="M8 19h4a2 2 0 0 1-4 0z" fill="#b5b5b5"/></svg>
  <span class="a" style="left:532px;top:7px;font-size:16.5px;font-weight:bold;color:#444">Sign In</span>
 </div>
 <div class="tool">
  <svg style="left:14px" viewBox="0 0 24 24"><path d="M3 3h15l3 3v15H3z M7 3v6h9V3 M6 21v-7h12v7" fill="none" stroke="#b8b8b8" stroke-width="1.8"/></svg>
  <svg style="left:58px" viewBox="0 0 24 24"><path d="M12 2.5l2.9 6.3 6.8.7-5.1 4.6 1.5 6.7L12 17.3l-5.9 3.5 1.5-6.7L2.5 9.5l6.8-.7z" fill="none" stroke="#555" stroke-width="1.7" stroke-linejoin="round"/></svg>
  <svg style="left:102px" viewBox="0 0 24 24"><path d="M8 18H6.5a4.2 4.2 0 0 1-.6-8.4A6.3 6.3 0 0 1 18 8.8a4.6 4.6 0 0 1 .2 9.2H16 M12 22V12 M8.5 15.5 12 12l3.5 3.5" fill="none" stroke="#555" stroke-width="2"/></svg>
  <svg style="left:145px" viewBox="0 0 24 24"><path d="M7 3h10v5H7z" fill="none" stroke="#555" stroke-width="1.8"/><path d="M2 8h20v10h-4v4H6v-4H2z" fill="#555"/><rect x="8" y="14" width="8" height="6" fill="#fff"/><path d="M9.5 16h5M9.5 18h5" stroke="#555"/></svg>
  <svg style="left:190px" viewBox="0 0 24 24"><rect x="2" y="5" width="20" height="14" fill="none" stroke="#555" stroke-width="1.8"/><path d="M2 5l10 8 10-8M2 19l7.5-7M22 19l-7.5-7" fill="none" stroke="#555" stroke-width="1.6"/></svg>
  <svg style="left:234px" viewBox="0 0 24 24"><circle cx="10" cy="10" r="7.5" fill="none" stroke="#555" stroke-width="2"/><path d="M15.5 15.5 22 22" stroke="#555" stroke-width="2.4"/><circle cx="7" cy="10" r="1.1" fill="#555"/><circle cx="10" cy="10" r="1.1" fill="#555"/><circle cx="13" cy="10" r="1.1" fill="#555"/></svg>
  <span class="n" style="left:288px">1</span><div class="a" style="left:278px;top:35px;width:28px;height:1px;background:#ccc"></div>
  <span class="n" style="left:312px">/ 1</span>
  <div class="a" style="left:349px;top:9px;width:1px;height:27px;background:#ccc"></div>
  <span class="n" style="left:383px">55%</span><div class="a" style="left:370px;top:35px;width:70px;height:1px;background:#ccc"></div>
  <div class="a" style="left:425px;top:21px;width:0;height:0;border-left:4px solid transparent;border-right:4px solid transparent;border-top:5px solid #555"></div>
  <div class="a" style="left:465px;top:21px;width:4px;height:4px;border-radius:2px;background:#555;box-shadow:7px 0 0 #555,14px 0 0 #555"></div>
  <div class="a" style="left:511px;top:7px;width:100px;height:32px;border-radius:16px;background:#2680eb"></div>
  <svg class="a" style="left:528px;top:13px;width:20px;height:20px" viewBox="0 0 20 20"><circle cx="7" cy="5" r="3.5" fill="#fff"/><path d="M1 16a6 6 0 0 1 11-3.5V16z" fill="#fff"/><circle cx="14.5" cy="14.5" r="4.5" fill="#fff"/><path d="M14.5 12v5M12 14.5h5" stroke="#2680eb" stroke-width="1.5"/></svg>
  <span class="a" style="left:555px;top:13px;font-size:16px;font-weight:bold;color:#fff">Share</span>
 </div>
 <div class="cont"><div class="lp"><i></i></div>
  <div class="a" style="left:531px;top:0;bottom:0;width:18px;background:#f0f0f0;border-left:1px solid #ddd"><span class="a" style="left:4px;top:3px;font-size:9px;color:#bbb">︿</span><span class="a" style="left:4px;bottom:3px;font-size:9px;color:#bbb">﹀</span></div>
  <div class="a" style="left:549px;top:0;bottom:0;width:18px;background:#e8e8e8;border-left:1px solid #d4d4d4;border-right:1px solid #d4d4d4"><div class="a" style="left:5px;top:376px;width:0;height:0;border-top:5px solid transparent;border-bottom:5px solid transparent;border-right:6px solid #555"></div></div>
  <div class="a" style="left:567px;top:0;bottom:0;width:47px;background:#fff">
   <svg class="a" style="left:13px;top:12px" width="22" height="20" viewBox="0 0 22 20"><ellipse cx="9" cy="8" rx="7.5" ry="5.5" fill="none" stroke="#555" stroke-width="2"/><circle cx="9" cy="8" r="2.5" fill="#555"/><path d="M14 12l5 5" stroke="#555" stroke-width="2.4"/></svg>
   <div class="a" style="left:7px;top:46px;width:33px;height:1px;background:#ccc"></div>
   <svg class="a" style="left:12px;top:60px" width="24" height="22" viewBox="0 0 24 22"><path d="M2 1h10l3 3v15H2z" fill="#d6f0f0" stroke="#1a9fa6" stroke-width="1.6"/><circle cx="17" cy="15" r="5.5" fill="#1a9fa6"/><path d="M14 15h6M18 12.5l2.5 2.5-2.5 2.5" stroke="#fff" stroke-width="1.3" fill="none"/></svg>
   <svg class="a" style="left:12px;top:102px" width="24" height="22" viewBox="0 0 24 22"><path d="M2 1h10l3 3v15H2z" fill="#fde1e1" stroke="#e84646" stroke-width="1.6"/><circle cx="17" cy="15" r="5.5" fill="#e84646"/><path d="M17 12v6M14 15h6" stroke="#fff" stroke-width="1.4"/></svg>
   <svg class="a" style="left:12px;top:143px" width="24" height="22" viewBox="0 0 24 22"><rect x="1" y="2" width="21" height="7" fill="#f6c9dc" stroke="#d7377f" stroke-width="1.6"/><rect x="1" y="12" width="9" height="7" fill="#f6c9dc" stroke="#d7377f" stroke-width="1.6"/><path d="M13 13h9M13 16h9M13 19h9" stroke="#d7377f" stroke-width="1.2"/></svg>
   <svg class="a" style="left:12px;top:187px" width="24" height="22" viewBox="0 0 24 22"><path d="M2 2h20v12H9l-4 4v-4H2z" fill="#e6bd2b"/><path d="M6 7h12M6 10h9" stroke="#fff" stroke-width="1.4"/></svg>
   <svg class="a" style="left:12px;top:228px" width="24" height="22" viewBox="0 0 24 22"><path d="M1 4h10v9H1z" fill="#6b63f0"/><path d="M13 1h7l3 3v11h-10z" fill="#6b63f0"/><path d="M6 13v6M3 16l3 3 3-3" stroke="#6b63f0" stroke-width="2" fill="none"/><path d="M4 10c1-2 2-4 2-5" stroke="#fff" stroke-width=".8" fill="none"/></svg>
   <svg class="a" style="left:12px;top:276px" width="24" height="22" viewBox="0 0 24 22"><rect x="13" y="2" width="8" height="17" fill="#e4f5d6" stroke="#7ccc3a" stroke-width="1.8"/><path d="M2 9h8v10H2z" fill="none" stroke="#7ccc3a" stroke-width="1.8" stroke-dasharray="2 1.5"/><path d="M4 6l3-3M4 3v3h3" stroke="#7ccc3a" stroke-width="1.5" fill="none"/></svg>
   <svg class="a" style="left:12px;top:317px" width="24" height="22" viewBox="0 0 24 22"><path d="M3 17l12-12 4 4-12 12H3z" fill="#f6c9dc" stroke="#e23f8b" stroke-width="1.6"/><path d="M1 20h22" stroke="#e23f8b" stroke-width="2"/></svg>
   <svg class="a" style="left:12px;top:363px" width="24" height="22" viewBox="0 0 24 22"><path d="M12 1l9 3v7c0 5-4 8.5-9 10-5-1.5-9-5-9-10V4z" fill="#e0e0fb" stroke="#6b6bee" stroke-width="1.8"/><path d="M12 1v20c5-1.5 9-5 9-10V4z" fill="#fff"/></svg>
   <svg class="a" style="left:10px;top:410px" width="28" height="22" viewBox="0 0 28 22"><path d="M8 2h10l3 3v15H8z" fill="#d6f0f0" stroke="#1a9fa6" stroke-width="1.6"/><path d="M1 8l3 3-3 3M27 8l-3 3 3 3" stroke="#1a9fa6" stroke-width="1.6" fill="none"/></svg>
   <svg class="a" style="left:12px;top:452px" width="24" height="22" viewBox="0 0 24 22"><path d="M2 17l11-11 4 4-11 11H2z" fill="#e8dbfb" stroke="#8d5fe0" stroke-width="1.6"/><path d="M14 19c2-3 3 1 5-1s2 1 4 0" stroke="#8d5fe0" stroke-width="1.5" fill="none"/></svg>
   <svg class="a" style="left:12px;top:496px" width="24" height="24" viewBox="0 0 24 24"><path d="M2 1h10l3 3v16H2z" fill="#fbefc8" stroke="#e2b300" stroke-width="1.6"/><path d="M11 12h12v8h-7l-3 3v-3h-2z" fill="#e2b300"/><path d="M14 15h6M14 17.5h4" stroke="#fff" stroke-width="1"/></svg>
   <svg class="a" style="left:12px;top:542px" width="24" height="24" viewBox="0 0 24 24"><path d="M3 19l8-8a5 5 0 0 1 6-6l-3 3 1.5 2.5L18 11l3-3a5 5 0 0 1-6 6l-8 8z" fill="#666"/><circle cx="18" cy="18" r="5" fill="#666"/><path d="M18 15.5v5M15.5 18h5" stroke="#fff" stroke-width="1.4"/></svg>
   <div class="a" style="left:7px;top:715px;width:33px;height:1px;background:#ccc"></div>
   <svg class="a" style="left:16px;top:733px" width="16" height="14" viewBox="0 0 16 14"><path d="M2 1v12" stroke="#555" stroke-width="2"/><path d="M5 7h9M10.5 3.5 14 7l-3.5 3.5" stroke="#555" stroke-width="1.8" fill="none"/></svg>
  </div>
  <div class="page" style="left:25px">
   <div class="p ct ttl" style="top:56px">RF::PDF Demo / Rich Filter Created vs. Resolved Chart</div>
   <svg class="a" style="left:0;top:0" width="501" height="270" viewBox="0 0 501 270">
    <defs>
     <marker id="m4" viewBox="0 0 5 5" refX="2.5" refY="2.5" markerWidth="5" markerHeight="5" markerUnits="userSpaceOnUse"><circle cx="2.5" cy="2.5" r="1.8" fill="#fff" stroke="#f4553a" stroke-width="1"/></marker>
     <marker id="m5" viewBox="0 0 5 5" refX="2.5" refY="2.5" markerWidth="5" markerHeight="5" markerUnits="userSpaceOnUse"><circle cx="2.5" cy="2.5" r="1.8" fill="#fff" stroke="#2fa86b" stroke-width="1"/></marker>
    </defs>
    <g stroke="#dcdcdc" stroke-width=".6"><path d="M72 80H452M72 92.7H452M72 105.3H452M72 118H452M72 130.7H452M72 143.3H452M72 156H452M72 168.7H452M72 181.3H452M72 232H452M72 243H452"/></g>
    <path d="M72 194H452M72 254H452" stroke="#b5bcc8" stroke-width=".8"/>
    <path d="M425 80V254" stroke="#999" stroke-width=".6" stroke-dasharray="2 1.5"/>
    <g font-size="4.4" fill="#556" text-anchor="end"><text x="67" y="81.5">180</text><text x="67" y="94.2">160</text><text x="67" y="106.8">140</text><text x="67" y="119.5">120</text><text x="67" y="132.2">100</text><text x="67" y="144.8">80</text><text x="67" y="157.5">60</text><text x="67" y="170.2">40</text><text x="67" y="182.8">20</text><text x="67" y="195.5">0</text><text x="67" y="233.5">100</text><text x="67" y="244.5">50</text><text x="67" y="255.5">0</text></g>
    <text transform="translate(53.5 137) rotate(-90)" font-size="4.6" fill="#667" text-anchor="middle">Issues (cumulative total)</text>
    <g font-size="4.2" fill="#556" text-anchor="middle"><text x="99" y="202">W46</text><text x="120.7" y="202">W47</text><text x="142.5" y="202">W48</text><text x="164.2" y="202">W49</text><text x="185.9" y="202">W50</text><text x="207.7" y="202">W51</text><text x="229.4" y="202">W52</text><text x="251.1" y="202">W01</text><text x="272.8" y="202">W02</text><text x="294.6" y="202">W03</text><text x="316.3" y="202">W04</text><text x="338" y="202">W05</text><text x="359.8" y="202">W06</text><text x="381.5" y="202">W07</text><text x="403.2" y="202">W08</text><text x="425" y="202">W09</text>
     <text x="121" y="211">Nov 2019</text><text x="196" y="211">Dec 2019</text><text x="294" y="211">Jan 2020</text><text x="392" y="211">Feb 2020</text></g>
    <circle cx="228" cy="220" r="1.8" fill="#fff" stroke="#f4553a"/><text x="232" y="221.6" font-size="4.6" fill="#556">Created</text>
    <circle cx="266" cy="220" r="1.8" fill="#fff" stroke="#2fa86b"/><text x="270" y="221.6" font-size="4.6" fill="#556">Resolved</text>
    <polyline fill="none" stroke="#f4553a" stroke-width="1" marker-start="url(#m4)" marker-mid="url(#m4)" marker-end="url(#m4)" points="99,178.2 120.7,172.5 142.5,168 164.2,161.7 185.9,156 207.7,148.4 229.4,145.2 251.1,140.2 272.8,134.5 294.6,130.7 316.3,123.1 338,114.8 359.8,107.2 381.5,98.4 403.2,93.9 425,93.9"/>
    <polyline fill="none" stroke="#2fa86b" stroke-width="1" marker-start="url(#m5)" marker-mid="url(#m5)" marker-end="url(#m5)" points="99,191.5 120.7,185.8 142.5,183.9 164.2,182 185.9,179.4 207.7,175.6 229.4,174.4 251.1,169.3 272.8,167.4 294.6,166.8 316.3,164.9 338,163 359.8,160.4 381.5,158.5 403.2,154.7 425,154.7"/>
    <polyline fill="none" stroke="#0b44c8" stroke-width="1" points="99,249.4 120.7,249.4 142.5,248.5 164.2,247 185.9,245.9 207.7,244.5 229.4,243.9 251.1,243.9 272.8,242.6 294.6,241.5 316.3,239.5 338,237.3 359.8,235.5 381.5,233.1 403.2,232.9 425,232.9"/>
   </svg>
   <div class="p" style="left:48px;top:280px">Time intervals: 16 weeks</div>
   <div class="p" style="left:48px;top:290px">Values: Issue Count</div>
   <div class="p" style="left:48px;top:308px">158 issues created</div>
   <div class="p" style="left:48px;top:317px">62 issues resolved</div>
   <div class="p ct cd" style="top:338px">Chart Data</div>
   <div class="tbl" style="left:48px;top:373px;width:405px">
    <div style="position:relative;height:24px;border-bottom:2px solid #c1c7d0">
     <span class="hd" style="left:0;top:2px">Time</span>
     <span class="hd" style="left:260px;top:2px;transform:translateX(-50%)">Issue Count</span>
     <div class="a" style="left:116px;top:11px;width:289px;height:2px;background:#c1c7d0"></div>
     <span class="hd" style="left:151px;top:14px;transform:translateX(-50%)">Created</span>
     <span class="hd" style="left:226px;top:14px;transform:translateX(-50%)">Resolved</span>
     <span class="hd" style="left:336px;top:14px;transform:translateX(-50%)">Unresolved trend</span>
    </div>
    <div class="r"><span style="left:3px">Week 46, 2019</span><span class="c" style="left:151px">25</span><span class="c" style="left:226px">4</span><span class="c" style="left:336px">21</span></div>
    <div class="r"><span style="left:3px">Week 47, 2019</span><span class="c" style="left:151px">34</span><span class="c" style="left:226px">13</span><span class="c" style="left:336px">21</span></div>
    <div class="r"><span style="left:3px">Week 48, 2019</span><span class="c" style="left:151px">41</span><span class="c" style="left:226px">16</span><span class="c" style="left:336px">25</span></div>
    <div class="r"><span style="left:3px">Week 49, 2019</span><span class="c" style="left:151px">51</span><span class="c" style="left:226px">19</span><span class="c" style="left:336px">32</span></div>
    <div class="r"><span style="left:3px">Week 50, 2019</span><span class="c" style="left:151px">60</span><span class="c" style="left:226px">23</span><span class="c" style="left:336px">37</span></div>
    <div class="r"><span style="left:3px">Week 51, 2019</span><span class="c" style="left:151px">72</span><span class="c" style="left:226px">29</span><span class="c" style="left:336px">43</span></div>
    <div class="r"><span style="left:3px">Week 52, 2019</span><span class="c" style="left:151px">77</span><span class="c" style="left:226px">31</span><span class="c" style="left:336px">46</span></div>
    <div class="r"><span style="left:3px">Week 1, 2020</span><span class="c" style="left:151px">85</span><span class="c" style="left:226px">39</span><span class="c" style="left:336px">46</span></div>
    <div class="r"><span style="left:3px">Week 2, 2020</span><span class="c" style="left:151px">94</span><span class="c" style="left:226px">42</span><span class="c" style="left:336px">52</span></div>
    <div class="r"><span style="left:3px">Week 3, 2020</span><span class="c" style="left:151px">100</span><span class="c" style="left:226px">43</span><span class="c" style="left:336px">57</span></div>
    <div class="r"><span style="left:3px">Week 4, 2020</span><span class="c" style="left:151px">112</span><span class="c" style="left:226px">46</span><span class="c" style="left:336px">66</span></div>
    <div class="r"><span style="left:3px">Week 5, 2020</span><span class="c" style="left:151px">125</span><span class="c" style="left:226px">49</span><span class="c" style="left:336px">76</span></div>
    <div class="r"><span style="left:3px">Week 6, 2020</span><span class="c" style="left:151px">137</span><span class="c" style="left:226px">53</span><span class="c" style="left:336px">84</span></div>
    <div class="r"><span style="left:3px">Week 7, 2020</span><span class="c" style="left:151px">151</span><span class="c" style="left:226px">56</span><span class="c" style="left:336px">95</span></div>
    <div class="r"><span style="left:3px">Week 8, 2020</span><span class="c" style="left:151px">158</span><span class="c" style="left:226px">62</span><span class="c" style="left:336px">96</span></div>
    <div class="r"><span style="left:3px">Week 9, 2020</span><span class="c" style="left:151px">158</span><span class="c" style="left:226px">62</span><span class="c" style="left:336px">96</span></div>
    <div class="r" style="border-bottom:3px solid #c1c7d0"><span style="left:3px">Initial value</span><span class="c" style="left:151px">15</span><span class="c" style="left:226px">0</span><span class="c" style="left:336px">15</span></div>
    <div style="position:relative;height:12px"><span class="hd" style="left:3px;top:2px">Total</span><span class="hd" style="left:151px;top:2px;transform:translateX(-50%)">158</span><span class="hd" style="left:226px;top:2px;transform:translateX(-50%)">62</span><span class="hd" style="left:336px;top:2px;transform:translateX(-50%)">96</span></div>
   </div>
   <div class="p" style="left:48px;top:679px">25/Feb/20 6:40 PM</div>
   <div class="p ct" style="top:679px;font-weight:bold">– 1 –</div>
   <div class="p" style="right:48px;top:679px">Kenzie Martin</div>
  </div>
 </div>
</div>
</body></html>
